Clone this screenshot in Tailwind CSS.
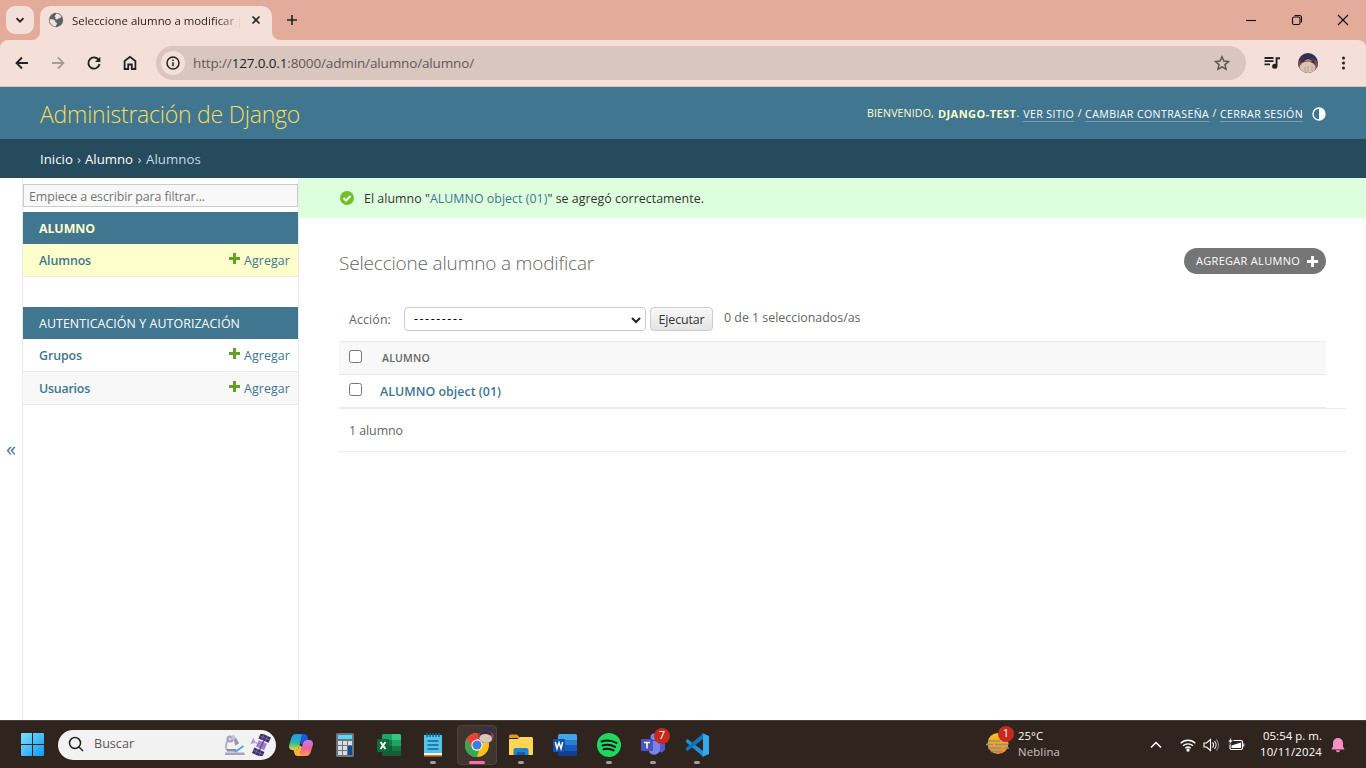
<!DOCTYPE html>
<html lang="es">
<head>
<meta charset="utf-8">
<title>Seleccione alumno a modificar | Sitio de administración de Django</title>
<script src="https://cdn.jsdelivr.net/npm/@tailwindcss/browser@4"></script>
</head>
<body class="h-[768px] w-[1366px] overflow-hidden bg-white font-['Open_Sans',sans-serif] text-[12.4px] text-[#666]">
<div class="flex h-[768px] flex-col">

  <!-- Tab strip -->
  <header class="flex h-10 shrink-0 items-start bg-[#e3ab99] pt-1.5">
    <button class="ml-1.5 flex size-7 items-center justify-center rounded-[9px] bg-[#f5e0d9]">
      <svg class="size-7" viewBox="0 0 28 28" fill="none" stroke="#222" stroke-width="1.8"><path d="M10.5 12.2 14 15.7l3.5-3.5"/></svg>
    </button>
    <div class="relative ml-1.5 flex h-[34px] w-[232px] items-center rounded-t-[10px] bg-[#f5e0d9] pl-2">
      <svg class="absolute bottom-0 -left-2 size-2" viewBox="0 0 8 8"><path d="M8 0v8H0A8 8 0 0 0 8 0Z" fill="#f5e0d9"/></svg>
      <svg class="absolute -right-2 bottom-0 size-2" viewBox="0 0 8 8"><path d="M0 0v8h8A8 8 0 0 1 0 0Z" fill="#f5e0d9"/></svg>
      <svg class="mb-1.5 size-4 shrink-0" viewBox="0 0 16 16"><circle cx="8" cy="8" r="7.2" fill="#5b6368"/><path d="M8.200 1.600c2.200.1 4.300 1.500 5.200 3.500-.9 1-1.600 1.200-2.400 1-.6.900-1.400 1.500-2.600 1.300-1.300-.2-1.300-1.300-.7-2.100C6.500 5 6.600 4 7.300 3.300 8.100 2.900 7.800 2.200 8.200 1.600ZM1.500 7.400c1.700-.2 4.100-.1 5.100.8.900.8.300 1.900 1.500 2.200 1.200.4 1.300 1.300.5 2.100-.5.600-.4 1.200-.8 1.900C4.300 14.300 1.500 11.500 1.500 7.400Z" fill="#f5e0d9"/></svg>
      <span class="mb-1 ml-2 w-[168px] shrink-0 text-[11.4px] whitespace-nowrap text-[#2b2422] [mask-image:linear-gradient(to_right,black_145px,transparent_174px)]">Seleccione alumno a modificar |</span>
      <svg class="mb-1.5 ml-2 size-4" viewBox="0 0 16 16" stroke="#222" stroke-width="1.6"><path d="m4.500 4.500 7 7m0-7-7 7"/></svg>
    </div>
    <svg class="mt-1.5 ml-3 size-4" viewBox="0 0 16 16" stroke="#222" stroke-width="1.6"><path d="M8 3v10M3 8h10"/></svg>
    <div class="mt-1.5 ml-auto flex gap-[30px] pr-[15px]">
      <svg class="size-4" viewBox="0 0 16 16" stroke="#111" stroke-width="1.1"><path d="M3 8.500h10"/></svg>
      <svg class="size-4" viewBox="0 0 16 16" fill="none" stroke="#111" stroke-width="1.1"><rect x="3.5" y="5" width="7.5" height="7.5" rx="1.5"/><path d="M5.500 3.500h5a2 2 0 0 1 2 2v5"/></svg>
      <svg class="size-4" viewBox="0 0 16 16" stroke="#111" stroke-width="1.1"><path d="m3 3 10 10m0-10L3 13"/></svg>
    </div>
  </header>

  <!-- Toolbar -->
  <div class="h-[47px] shrink-0 bg-[#e3ab99]">
    <div class="flex h-[47px] items-center rounded-t-lg border-b border-[#d5c5c0] bg-[#f5e0d9] pl-3.5">
      <svg class="size-4" viewBox="0 0 16 16" fill="none" stroke="#222" stroke-width="1.8"><path d="M14 8H3M8 2.500 2.500 8 8 13.500"/></svg>
      <svg class="ml-5 size-4" viewBox="0 0 16 16" fill="none" stroke="#a99b97" stroke-width="1.8"><path d="M2 8h11M8 2.500 13.500 8 8 13.500"/></svg>
      <svg class="ml-5 size-4" viewBox="0 0 16 16"><path d="M12.700 5A5.600 5.600 0 1 0 13.500 9" fill="none" stroke="#222" stroke-width="1.9"/><path d="M14.300 1.800V7H9z" fill="#222"/></svg>
      <svg class="ml-5 size-4" viewBox="0 0 16 16" fill="none" stroke="#222" stroke-width="1.8"><path d="M2.600 14V6L8 1.900 13.400 6v8H9.800V9.500H6.200V14Z"/></svg>
      <div class="ml-[18px] flex h-[34px] w-[1090px] items-center rounded-full bg-[#d8c6bf] pr-4 pl-[5px]">
        <span class="flex size-6 items-center justify-center rounded-full bg-[#f5e0d9]">
          <svg class="size-4" viewBox="0 0 16 16"><circle cx="8" cy="8" r="6" fill="none" stroke="#222" stroke-width="1.5"/><path d="M8 7.200v4M8 4.500v1.500" stroke="#222" stroke-width="1.5"/></svg>
        </span>
        <span class="ml-2 text-[13.5px] tracking-[-0.141px] whitespace-nowrap text-[#65595a]">http://<span class="text-[#241f1e]">127.0.0.1</span>:8000/admin/alumno/alumno/</span>
        <svg class="ml-auto size-4" viewBox="0 0 16 16" fill="none" stroke="#5f5552" stroke-width="1.5"><path d="m8 1.800 1.900 4.300 4.600.4-3.500 3.100 1 4.600L8 11.800l-4 2.400 1-4.600-3.500-3.100 4.600-.4Z"/></svg>
      </div>
      <svg class="ml-[18px] size-4" viewBox="0 0 16 16"><path d="M.5 3h9M.5 6.200h9M.5 9.400h5.500" stroke="#222" stroke-width="1.8"/><path d="M11 2.200h5v2h-2.500v7.100a2.700 2.500 0 1 1-1.900-2.400V2.200Z" fill="#222"/></svg>
      <svg class="ml-[18px] size-5" viewBox="0 0 20 20"><defs><clipPath id="av"><circle cx="10" cy="10" r="10"/></clipPath></defs><g clip-path="url(#av)"><path fill="#352f55" d="M0 0h20v20H0z"/><path fill="#7d4e50" d="M0 9c3-3 5-4 10-4s8 2 10 5v10H0z"/><ellipse cx="9.5" cy="15" rx="8" ry="6.500" fill="#d9c3b6"/><path d="M2 10c4-2 10-2 15 1l-1-4-7-3-6 3z" fill="#3a2c3a"/><path d="M6 8l4-2 5 2-5 1z" fill="#b9857b"/><path d="M7 14v5m3-6v6m4-6v5" stroke="#b69c94"/></g></svg>
      <svg class="ml-[17px] size-4" viewBox="0 0 16 16" fill="#222"><circle cx="8.500" cy="3" r="1.5"/><circle cx="8.500" cy="8" r="1.5"/><circle cx="8.500" cy="13" r="1.5"/></svg>
    </div>
  </div>

  <!-- Site header -->
  <div class="flex h-[52px] shrink-0 items-center justify-between bg-[#417690] px-10">
    <h1 class="mt-0.5 text-[23px] font-light tracking-[-0.227px] whitespace-nowrap text-[#f5dd5d]">Administración de Django</h1>
    <div class="flex items-center pt-0.5 text-[10.6px] whitespace-nowrap text-[#ffc]">
      <span class="tracking-[0.138px]">BIENVENIDO,</span><b class="ml-1 text-[11px] tracking-[0.45px]">DJANGO-TEST</b>.
      <a class="ml-1 border-b border-white/30 leading-[14px] tracking-[0.411px] text-white">VER SITIO</a><span class="mx-[3.5px]">/</span>
      <a class="border-b border-white/30 leading-[14px] tracking-[0.387px] text-white">CAMBIAR CONTRASEÑA</a><span class="mx-[3.5px]">/</span>
      <a class="border-b border-white/30 leading-[14px] tracking-[0.361px] text-white">CERRAR SESIÓN</a>
      <svg class="mb-px ml-[9px] size-3.5" viewBox="0 0 14 14"><circle cx="7" cy="7" r="6" fill="none" stroke="#fff" stroke-width="1.4"/><path d="M7 1a6 6 0 0 1 0 12Z" fill="#fff"/></svg>
    </div>
  </div>
  <nav class="flex h-[39px] shrink-0 items-center bg-[#264b5d] pt-0.5 pl-10 text-[13.2px] whitespace-nowrap text-[#c4dce8]">
    <a class="tracking-[0.05px] text-white">Inicio</a><span class="w-3 text-center">›</span><a class="text-white">Alumno</a><span class="w-[13px] text-center">›</span><span class="tracking-[0.1px]">Alumnos</span>
  </nav>

  <!-- Admin body -->
  <div class="flex min-h-0 flex-1">
    <button class="flex w-[23px] shrink-0 items-center justify-center border-r border-[#eaeaea] text-xl text-[#417690]">«</button>
    <aside class="w-[276px] shrink-0 border-r border-[#eaeaea] pt-1.5 whitespace-nowrap text-[#417690]">
      <div class="mb-[5px] flex h-[23px] items-center border border-[#ccc] bg-[#f8f8f8] pt-[3px] pl-[5px] tracking-[-0.102px] text-[#757575]">Empiece a escribir para filtrar...</div>
      <h2 class="flex h-8 items-center bg-[#417690] pt-[3px] pl-4 font-bold tracking-[-0.09px] text-[#ffc]">ALUMNO</h2>
      <div class="mb-[30px] flex h-[33px] items-center justify-between border-b border-[#eaeaea] bg-[#ffc] pt-[3px] pr-2 pl-4"><span class="font-semibold tracking-[-0.116px]">Alumnos</span><span class="flex items-center gap-1"><svg class="mb-1.5 size-[11px]" viewBox="0 0 11 11"><path d="M5.500 0v11M0 5.500h11" stroke="#5fa225" stroke-width="3"/></svg><span class="tracking-[0.105px]">Agregar</span></span></div>
      <h2 class="flex h-8 items-center bg-[#417690] pt-[3px] pl-4 tracking-[0.07px] text-white">AUTENTICACIÓN Y AUTORIZACIÓN</h2>
      <div class="flex h-[33px] items-center justify-between border-b border-[#eaeaea] pt-[3px] pr-2 pl-4"><span class="font-semibold tracking-[-0.09px]">Grupos</span><span class="flex items-center gap-1"><svg class="mb-1.5 size-[11px]" viewBox="0 0 11 11"><path d="M5.500 0v11M0 5.500h11" stroke="#5fa225" stroke-width="3"/></svg><span class="tracking-[0.105px]">Agregar</span></span></div>
      <div class="flex h-[33px] items-center justify-between border-b border-[#eaeaea] bg-[#f8f8f8] pt-[3px] pr-2 pl-4"><span class="font-semibold tracking-[-0.21px]">Usuarios</span><span class="flex items-center gap-1"><svg class="mb-1.5 size-[11px]" viewBox="0 0 11 11"><path d="M5.500 0v11M0 5.500h11" stroke="#5fa225" stroke-width="3"/></svg><span class="tracking-[0.105px]">Agregar</span></span></div>
    </aside>
    <main class="flex-1 whitespace-nowrap">
      <div class="flex h-10 items-center bg-[#dfd] pl-[41px] text-[#333]">
        <svg class="mr-2.5 size-3.5" viewBox="0 0 14 14"><circle cx="7" cy="7" r="7" fill="#70bf2b"/><path d="m3.500 7 2.500 2.500 4.500-4.500" fill="none" stroke="#fff" stroke-width="2"/></svg>
        <span class="pt-[3px] tracking-[0.036px]">El alumno "<a class="text-[#417690]">ALUMNO object (01)</a>" se agregó correctamente.</span>
      </div>
      <div class="pt-[30px] pr-10 pl-10">
        <div class="flex h-[30px] items-start justify-between">
          <h1 class="text-[19px] leading-[30px] font-light tracking-[-0.183px]">Seleccione alumno a modificar</h1>
          <a class="flex h-[26px] w-[142px] items-center rounded-full bg-[#757575] pl-3 text-[11px] text-white"><span class="w-[104px] pt-px tracking-[0.3px]">AGREGAR ALUMNO</span><svg class="ml-[7px] size-[11px]" viewBox="0 0 11 11"><path d="M5.500 0v11M0 5.500h11" stroke="#fff" stroke-width="2.8"/></svg></a>
        </div>
        <div class="mt-[29px] flex h-6 items-center pl-2.5">
          <span class="w-[42px] pt-0.5 tracking-[0.12px]">Acción:</span>
          <span class="ml-[13px] flex h-6 w-[242px] items-center justify-between rounded border border-[#ccc] bg-white pt-px pr-1 pl-[9px] text-black"><span class="tracking-[1.57px]">---------</span><svg class="size-2.5" viewBox="0 0 10 10"><path d="m1 3 4 4 4-4" fill="none" stroke="#222" stroke-width="2"/></svg></span>
          <button class="ml-1 flex h-6 w-[63px] items-center justify-center rounded border border-[#ccc] bg-linear-to-b from-[#f8f8f8] to-[#e4e4e4] pt-0.5 tracking-[-0.109px] text-[#333]">Ejecutar</button>
          <span class="mb-0.5 ml-[11px]">0 de 1 seleccionados/as</span>
        </div>
        <div class="mt-2.5 flex h-[34px] items-center border-y border-[#eaeaea] bg-[#f8f8f8] pl-2.5"><span class="mb-[3px] size-[13px] rounded-[2.5px] border border-[#767676] bg-white"></span><span class="ml-5 pt-0.5 text-[10.6px] font-semibold tracking-[0.16px]">ALUMNO</span></div>
        <div class="flex h-[33px] items-center border-b border-[#eaeaea] pl-2.5"><span class="mb-1 size-[13px] rounded-[2.5px] border border-[#767676] bg-white"></span><a class="ml-[18px] pt-0.5 font-semibold tracking-[0.034px] text-[#417690]">ALUMNO object (01)</a></div>
        <div class="-mr-5 flex h-11 items-center border-y border-[#eaeaea] pt-0.5 pl-2.5 tracking-[-0.057px]">1 alumno</div>
      </div>
    </main>
  </div>

  <!-- Taskbar -->
  <footer class="flex h-12 shrink-0 items-center border-t border-[#4a403c] bg-[#30241f] pl-[21px] text-[11.4px] text-white">
    <svg class="size-[23px]" viewBox="0 0 23 23"><defs><linearGradient id="win" x1="0" y1="0" x2="1" y2="1"><stop stop-color="#7fe0ff"/><stop offset="1" stop-color="#0b9bf5"/></linearGradient></defs><path fill="url(#win)" d="M1 0h10v11H0V1a1 1 0 0 1 1-1Zm11 0h10a1 1 0 0 1 1 1v10H12ZM0 12h11v11H1a1 1 0 0 1-1-1Zm12 0h11v10a1 1 0 0 1-1 1H12Z"/></svg>
    <div class="ml-3.5 flex h-[30px] w-[218px] items-center rounded-full bg-[#f3f2f2] pr-1 pl-2.5">
      <svg class="mb-px size-4" viewBox="0 0 16 16" fill="none" stroke="#222" stroke-width="1.5"><circle cx="7" cy="7" r="5.5"/><path d="m11 11 4 4"/></svg>
      <span class="ml-2.5 text-[12.6px] text-[#5a5757]">Buscar</span>
      <svg class="ml-auto size-[22px]" viewBox="0 0 22 22"><path d="M8 4c-5 1-7.500 7-5 12.500" fill="none" stroke="#b7b2c6" stroke-width="2"/><circle cx="6" cy="5" r="3.500" fill="#a39dba"/><circle cx="6" cy="5" r="1.600" fill="#d9d5e4"/><path d="m7 2 3-1.500 5 9-3.500 2.500z" fill="#c9c5d6"/><path d="m10 5 2-1 3 5-3.500 2.500z" fill="#9a94b0"/><path d="M1 18.500h19l1 2.500H1z" fill="#a9a2bb"/><path d="M3 15h9v2.500H3z" fill="#8e88a4"/><path d="m11 18 8.500-6" stroke="#3fa7e6" stroke-width="1.8"/></svg>
      <svg class="ml-1 size-[22px]" viewBox="0 0 22 22"><g transform="rotate(24 11 11)"><path fill="#3c3160" d="M6 0h11v6H6zM6 16h11v6H6z"/><path stroke="#8d7bbf" stroke-width=".6" d="M9.500 0v6m4-6v6M6 3h11M9.500 16v6m4-6v6M6 19h11"/><path fill="#9d7fce" d="M7 7.500h9v7H7z"/><path fill="#6b4fa5" d="M11 6h1.500v10H11z"/><path fill="#b595df" d="M1 7.500 5 11l-4 3.500zM5 10.300h2v1.400H5z"/></g></svg>
    </div>
    <div class="ml-[3px] flex h-full items-center">
      <!-- Copilot -->
      <span class="flex w-11 justify-center"><svg class="size-6" viewBox="0 0 24 24"><defs><linearGradient id="c1" x1="0" y1="0" x2="0" y2="1"><stop stop-color="#1a9af5"/><stop offset=".55" stop-color="#2fb5a5"/><stop offset="1" stop-color="#e6d534"/></linearGradient><linearGradient id="c2" x1="0" y1="0" x2="0" y2="1"><stop stop-color="#c07cf0"/><stop offset=".5" stop-color="#f0609c"/><stop offset="1" stop-color="#ff9a4a"/></linearGradient></defs><path fill="url(#c1)" d="M7 1h8.500c-1.500.3-2.300 1.200-2.800 3L10 14c-.5 2-1.500 3-3.500 3H3.500C.5 17-.5 14.500.3 11.500l2-6.500C3.200 2.300 4.500 1 7 1Z"/><path fill="url(#c2)" d="M17 23H8.500c1.500-.3 2.300-1.200 2.800-3L14 10c.5-2 1.500-3 3.500-3h3c3 0 4 2.500 3.200 5.500l-2 6.500c-.9 2.700-2.200 4-4.700 4Z"/><path fill="#1c58d8" d="M12 1h3.500c1.700 0 2.500 1 3 2.500L19.500 7h-2c-2 0-3 1-3.400 2.600L13.500 12 11 10l1.700-6c.4-1.500 0-2.500-.7-3Z"/><path fill="#f9b13f" d="M12 23H8.500c-1.700 0-2.500-1-3-2.500l-1-3.500h2c2 0 3-1 3.500-3l.5-2 2.500 2-1.700 6c-.4 1.500-.2 2.500.2 3Z"/></svg></span>
      <!-- Calculator -->
      <span class="flex w-11 justify-center"><svg class="h-6 w-[18px]" viewBox="0 0 18 24"><rect width="18" height="24" rx="1.5" fill="#6d757c"/><path fill="#5bd4f7" d="M2 2h14v4H2z"/><path fill="#d9dee2" d="M2 8h4v4H2zm5 0h4v4H7zm5 0h4v4h-4zM2 13h4v4H2zm5 0h4v4H7zM2 18h4v4H2zm5 0h4v4H7z"/><path fill="#0d4d8f" d="M12 13h4v9h-4z"/></svg></span>
      <!-- Excel -->
      <span class="flex w-11 justify-center"><svg class="size-6" viewBox="0 0 24 24"><rect x="5" y="1" width="19" height="22" rx="1.5" fill="#185c37"/><path fill="#21a366" d="M6.500 1H15v6H5V2.500A1.500 1.500 0 0 1 6.500 1Z"/><path fill="#33c481" d="M15 1h7.500A1.500 1.500 0 0 1 24 2.500V7h-9z"/><path fill="#107c41" d="M5 7h10v6H5z"/><path fill="#21a366" d="M15 7h9v6h-9z"/><path fill="#107c41" d="M15 13h9v5h-9z"/><rect y="6" width="12" height="13" rx="1" fill="#0e6b38"/><path d="m3.500 9 5 7m0-7-5 7" stroke="#fff" stroke-width="1.9"/></svg></span>
      <!-- Notepad -->
      <span class="relative flex w-11 justify-center"><svg class="size-6" viewBox="0 0 24 24"><path fill="#d98224" d="M3 20h18v3.500H3z"/><path fill="#f3f3f3" d="M3 19h18v3H3z"/><path fill="#55c4e8" d="M3 2h18v18H3z"/><path stroke="#0e6690" stroke-width="1.5" d="M6 0v4m3-4v4m3-4v4m3-4v4m3-4v4"/><path stroke="#0e6690" stroke-width="1.5" d="M6.500 8h11m-11 4h11m-11 4h11"/></svg><i class="absolute top-[28px] h-[3px] w-1.5 rounded-full bg-[#a29d9a]"></i></span>
      <!-- Chrome -->
      <span class="relative flex h-10 w-11 items-center justify-center"><i class="absolute inset-x-0.5 inset-y-0 rounded border border-[#4d423e] bg-[#40342f]"></i><svg class="relative size-6" viewBox="0 0 24 24"><circle cx="12" cy="12" r="12" fill="#fbc116"/><path fill="#ea4335" d="M1.600 6A12 12 0 0 1 22.400 6H12L6.800 15z"/><path fill="#34a853" d="M1.600 6 6.800 15a6 6 0 0 0 7.200 2.600L12 24A12 12 0 0 1 1.600 6Z"/><circle cx="12" cy="12" r="5.6" fill="#fff"/><circle cx="12" cy="12" r="4.6" fill="#3b7ded"/></svg><svg class="absolute top-0.5 left-[23px] size-4" viewBox="0 0 20 20"><g clip-path="url(#av)"><path fill="#352f55" d="M0 0h20v20H0z"/><path fill="#7d4e50" d="M0 9c3-3 5-4 10-4s8 2 10 5v10H0z"/><ellipse cx="9.5" cy="15" rx="8" ry="6.500" fill="#d9c3b6"/><path d="M2 10c4-2 10-2 15 1l-1-4-7-3-6 3z" fill="#3a2c3a"/></g></svg><i class="absolute top-[36px] h-[3px] w-4 rounded-full bg-[#f472a8]"></i></span>
      <!-- Explorer -->
      <span class="relative flex w-11 justify-center"><svg class="size-6" viewBox="0 0 24 24"><path fill="#d99a1c" d="M1.500 1.500H8L11 5H0V3a1.500 1.500 0 0 1 1.500-1.500Z"/><path fill="#ffd551" d="M0 6h8.500L11 4h11.500A1.500 1.500 0 0 1 24 5.500V22H0z"/><path fill="#2183cf" d="M6.500 15h11a2 2 0 0 1 2 2v5h-15v-5a2 2 0 0 1 2-2Z"/><path fill="#155e9f" d="M8 19h8v3H8z"/></svg><i class="absolute top-[28px] h-[3px] w-1.5 rounded-full bg-[#a29d9a]"></i></span>
      <!-- Word -->
      <span class="flex w-11 justify-center"><svg class="size-6" viewBox="0 0 24 24"><path fill="#41a5ee" d="M6.500 1h16A1.500 1.500 0 0 1 24 2.500V7H5V2.500A1.500 1.500 0 0 1 6.500 1Z"/><path fill="#2b7cd3" d="M5 7h19v5H5z"/><path fill="#185abd" d="M5 12h19v6H5z"/><path fill="#103f91" d="M5 18h19v3.500a1.500 1.500 0 0 1-1.500 1.500h-16A1.500 1.500 0 0 1 5 21.500z"/><rect y="6" width="12" height="13" rx="1" fill="#1650a8"/><path d="m2.300 9 1.700 6.500L6 9.500l2 6L9.700 9" fill="none" stroke="#fff" stroke-width="1.5"/></svg></span>
      <!-- Spotify -->
      <span class="relative flex w-11 justify-center"><svg class="size-6" viewBox="0 0 24 24"><circle cx="12" cy="12" r="12" fill="#1ed760"/><path d="M4.500 8.500c5-1.500 10.500-1 15 1.500M5.500 12.500c4.200-1.200 8.700-.7 12.500 1.400M6.500 16.300c3.500-1 7-.6 10 1.100" fill="none" stroke="#191414" stroke-width="2" stroke-linecap="round"/></svg><i class="absolute top-[28px] h-[3px] w-1.5 rounded-full bg-[#a29d9a]"></i></span>
      <!-- Teams -->
      <span class="relative flex w-11 justify-center"><svg class="size-6" viewBox="0 0 24 24"><circle cx="13" cy="4" r="3.5" fill="#7b83eb"/><path fill="#5059c9" d="M17 8h7v8a4 4 0 0 1-7 2z"/><path fill="#7b83eb" d="M8 8h11v8a6 6 0 0 1-11 3z"/><rect y="6" width="12" height="12" rx="1" fill="#4b53bc"/><path d="M3 9.500h6M6 9.500v6" stroke="#fff" stroke-width="1.5"/></svg><b class="absolute -top-[5px] left-[23px] flex size-4 items-center justify-center rounded-full bg-[#c42b1c] text-[11px] font-normal">7</b><i class="absolute top-[28px] h-[3px] w-1.5 rounded-full bg-[#a29d9a]"></i></span>
      <!-- VS Code -->
      <span class="relative flex w-11 justify-center"><svg class="size-6" viewBox="0 0 24 24"><path fill="#1f8fd8" d="M1 7.500 2.500 6 18 18v5.500L.8 9z"/><path fill="#0f75b8" d="M1 16.500 2.500 18 18 6V.5L.8 15z"/><path fill="#35a9f0" d="m17 0 7 3v18l-7 3 1-1.500v-21z"/></svg><i class="absolute top-[28px] h-[3px] w-1.5 rounded-full bg-[#a29d9a]"></i></span>
    </div>
    <div class="ml-auto flex h-full items-center pr-5 whitespace-nowrap">
      <span class="relative mb-1 flex"><svg class="size-6" viewBox="0 0 24 24"><defs><linearGradient id="sun" x1="0" y1="0" x2="0" y2="1"><stop stop-color="#fcc21b"/><stop offset="1" stop-color="#f28a1c"/></linearGradient></defs><circle cx="12" cy="12.500" r="10.500" fill="url(#sun)"/><path stroke="#8b8f92" stroke-width="1.7" d="M2 10h12m2 0h6M0 13.500h7m2 0h13M2 17h14m2 0h5M5 20.500h11"/></svg><b class="absolute -top-[5px] left-3 flex size-4 items-center justify-center rounded-full bg-[#c42b1c] text-[11px] font-normal">1</b></span>
      <span class="ml-2 flex w-[42px] flex-col pb-0.5 leading-4"><span>25°C</span><span class="tracking-[0.14px] text-[#c9c3c0]">Neblina</span></span>
      <svg class="ml-[88px] size-4" viewBox="0 0 16 16" fill="none" stroke="#fff" stroke-width="1.5"><path d="m3 10.500 5-5 5 5"/></svg>
      <svg class="ml-4 size-4" viewBox="0 0 16 16" fill="none" stroke="#fff" stroke-width="1.3"><path d="M.7 6.200a10.500 10.500 0 0 1 14.600 0M3 8.800a7.200 7.200 0 0 1 10 0M5.300 11.200a4 4 0 0 1 5.400 0"/><circle cx="8" cy="13" r="1" fill="#fff"/></svg>
      <svg class="ml-[7px] size-4" viewBox="0 0 16 16" fill="none" stroke="#fff" stroke-width="1.1"><path d="M1 6h2.500L7.500 2.500v11L3.500 10H1ZM9.500 5.500a3.500 3.500 0 0 1 0 5M11.500 4a6 6 0 0 1 0 8"/><path stroke="#827a77" d="M13.300 2.500a8 8 0 0 1 0 11"/></svg>
      <svg class="ml-2 size-[18px]" viewBox="0 0 18 18"><rect x="3" y="4.500" width="12.500" height="9" rx="1.500" fill="none" stroke="#fff" stroke-width="1.2"/><path fill="#fff" d="M4.500 9.500 14 6.500V12H4.500zM16.300 7.500h1v3h-1z"/><path fill="#fff" stroke="#30241f" stroke-width=".8" d="M4.500.5.800 6h2L1.500 9.500l5-5.500H4.200z"/></svg>
      <span class="ml-[15px] flex w-[62px] flex-col items-end pb-0.5 leading-4"><span class="tracking-[0.048px]">05:54 p. m.</span><span class="tracking-[0.15px]">10/11/2024</span></span>
      <svg class="ml-2 size-4" viewBox="0 0 16 16" fill="#ff8ec6"><path d="M8 1a5 5 0 0 1 5 5v3.500l1.500 3h-13l1.500-3V6a5 5 0 0 1 5-5ZM6 13.300h4a2 2 0 0 1-4 0Z"/></svg>
    </div>
  </footer>
</div>
</body>
</html>
